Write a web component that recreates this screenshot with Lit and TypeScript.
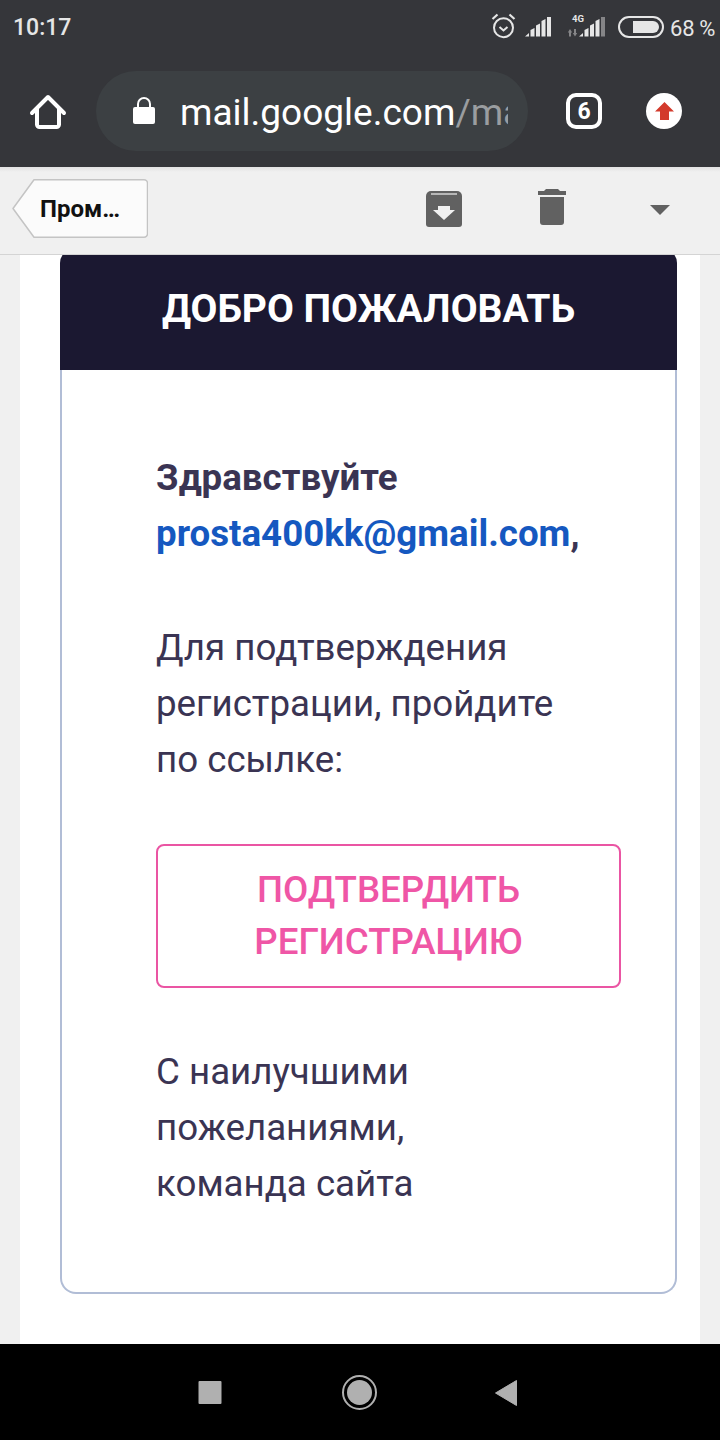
import { LitElement, html, css } from "lit";
import { customElement } from "lit/decorators.js";

@customElement("app-root")
export class AppRoot extends LitElement {
  static styles = css`
    :host { display: block; width: 720px; height: 1440px; font-family: Roboto, "Liberation Sans", sans-serif; }
    .page { width: 720px; height: 1440px; display: flex; flex-direction: column; overflow: hidden; background: #f0f0f0; }
    .chrome { height: 167px; flex: none; background: #35363a; display: flex; flex-direction: column; }
    .status { height: 56px; display: flex; align-items: center; padding: 0 7px 0 13px; color: #e6e6e6; justify-content: space-between; }
    .time { font-size: 23px; font-weight: 500; line-height: 56px; }
    .stat-r { display: flex; align-items: center; }
    .pct { font-size: 22px; margin-left: 6px; width: 43px; white-space: nowrap; word-spacing: -1px; }
    .urlbar { height: 111px; display: flex; align-items: flex-start; position: relative; }
    .home { margin: 37px 0 0 29px; width: 38px; height: 38px; flex: none; }
    .pill { margin: 15px 0 0 29px; width: 432px; height: 80px; box-sizing: border-box; border-radius: 40px; background: #3c4043; display: flex; align-items: center; padding-left: 37px; flex: none; }
    .lock { width: 22px; height: 28px; flex: none; }
    .url { font-size: 37px; color: #fff; margin-left: 25px; width: 328px; overflow: hidden; white-space: nowrap; line-height: 80px; padding-top: 4px; box-sizing: border-box; }
    .url span { color: #9a9da0; }
    .tabs { margin: 37px 0 0 38px; width: 36px; height: 36px; box-sizing: border-box; border: 4px solid #fff; border-radius: 10px; color: #fff; font-size: 23px; font-weight: 700; display: flex; align-items: center; justify-content: center; flex: none; }
    .up { margin: 37px 0 0 44px; width: 36px; height: 36px; flex: none; }
    .toolbar { height: 88px; flex: none; box-sizing: border-box; border-bottom: 1px solid #d4d4d4; background: linear-gradient(#e2e2e2, #f0f0f0 5px); position: relative; display: flex; align-items: flex-start; }
    .back { margin: 12px 0 0 12px; width: 136px; height: 59px; flex: none; position: relative; }
    .back svg { display: block; }
    .back span { position: absolute; left: 28px; top: 0; line-height: 60px; font-size: 24px; font-weight: 700; color: #111; }
    .ti { flex: none; }
    .mail { flex: 1; min-height: 0; margin: 0 20px; background: #fff; padding: 0 23px 0 40px; overflow: hidden; }
    .card-h { height: 121px; margin-top: -6px; background: #1b1831; border-radius: 14px 14px 0 0; color: #fff; font-size: 39px; font-weight: 700; text-align: center; line-height: 120px; }
    .card-b { box-sizing: border-box; height: 924px; background: #fff; border: 2px solid #b1bdd6; border-top: 0; border-radius: 0 0 16px 16px; padding: 80px 54px 0 94px; color: #3a3453; font-size: 36.7px; line-height: 56px; }
    .hello { font-weight: 700; }
    .hello a { color: #1558c0; text-decoration: none; }
    p { margin: 0; }
    .msg { margin-top: 58px; }
    .btn { margin-top: 56px; height: 144px; box-sizing: border-box; border: 2px solid #ea55a3; border-radius: 8px; color: #ef56a6; font-size: 36.7px; font-weight: 500; line-height: 52px; text-align: center; padding-top: 18px; }
    .sign { margin-top: 56px; }
    .nav { height: 96px; flex: none; background: #000; display: flex; align-items: flex-start; }
  `;

  render() {
    return html`<div class="page">
      <div class="chrome">
        <div class="status">
          <span class="time">10:17</span>
          <div class="stat-r">
            <svg width="173" height="32" viewBox="0 0 173 32">
              <g fill="none" stroke="#e6e6e6" stroke-width="2">
                <circle cx="12.500" cy="15.700" r="9.500"/>
                <path d="M8.500 15l4 3.500 4-3.500"/>
                <path d="M1.500 7l5-4.500M23.500 7l-5-4.500" stroke-width="2.200"/>
              </g>
              <g fill="#e6e6e6">
                <path d="M34 24.500l4-3.500v3.500zM39.500 24.500v-6.500l4-2v8.500zM45 24.500V13.500l4-2v13zM50.500 24.500V9l4-2v17.500zM56 24.500V5h4v19.500z"/>
                <text x="81" y="10" font-size="9.500" font-weight="700" font-family="Roboto, sans-serif">4G</text>
                <path d="M88 24.500l4-3.500v3.500zM93.500 24.500v-6.500l4-2v8.500zM99 24.500V13.500l4-2v13zM104.500 24.500V9l4-2v17.500z"/>
                <path d="M110 24.500V5h4v19.500z" opacity=".45"/>
                <path d="M79 17l2.200 3.500H80v4h-2v-4h-1.200zM83 17h2v4h1.200L84 24.500 81.800 21H83z" opacity=".45"/>
              </g>
              <rect x="128" y="5" width="44" height="20" rx="10" fill="none" stroke="#e6e6e6" stroke-width="2"/>
              <path d="M142 9h20a6 6 0 0 1 0 12h-20z" fill="#e6e6e6"/>
            </svg>
            <span class="pct">68 %</span>
          </div>
        </div>
        <div class="urlbar">
          <svg class="home" viewBox="0 0 38 38"><path d="M3 20L19 4l16 16M8 16v15.500a2.500 2.500 0 0 0 2.500 2.500h17a2.500 2.500 0 0 0 2.500-2.500V16" fill="none" stroke="#fff" stroke-width="4" stroke-linecap="round" stroke-linejoin="round"/></svg>
          <div class="pill">
            <svg class="lock" viewBox="0 0 22 28"><path d="M2 10h18a2 2 0 0 1 2 2v13a2 2 0 0 1-2 2H2a2 2 0 0 1-2-2V12a2 2 0 0 1 2-2z" fill="#fff"/><path d="M5 11V7a6 6 0 0 1 12 0v4" fill="none" stroke="#fff" stroke-width="2"/></svg>
            <div class="url">mail.google.com<span>/ma</span></div>
          </div>
          <div class="tabs">6</div>
          <svg class="up" viewBox="0 0 36 36"><circle cx="18" cy="18" r="18" fill="#fff"/><path d="M18.500 9l9.500 9.500h-5V27h-9v-8.500H9z" fill="#d33a2c"/></svg>
        </div>
      </div>
      <div class="toolbar">
        <div class="back">
          <svg width="136" height="59" viewBox="0 0 136 59"><path d="M22 .750h110a3.500 3.500 0 0 1 3.500 3.500v50.500a3.500 3.500 0 0 1-3.500 3.500H22L1 29.500z" fill="#fbfbfb" stroke="#c4c4c4" stroke-width="1.500" stroke-linejoin="round"/></svg>
          <span>Пром…</span>
        </div>
        <svg class="ti" style="margin: 24px 0 0 278px" width="36" height="36" viewBox="0 0 36 36"><path d="M5 0h26a5 5 0 0 1 5 5v28a3 3 0 0 1-3 3H3a3 3 0 0 1-3-3V5a5 5 0 0 1 5-5z" fill="#616161"/><path d="M5 3h26" stroke="#f0f0f0" stroke-width="1.200"/><path d="M12 15h12v4h5L18 29 7 19h5z" fill="#f0f0f0"/></svg>
        <svg class="ti" style="margin: 22px 0 0 76px" width="28" height="36" viewBox="0 0 28 36"><path d="M0 2h6L8 0h12l2 2h6v4H0zM2 8h24v25a3 3 0 0 1-3 3H5a3 3 0 0 1-3-3z" fill="#616161"/></svg>
        <svg class="ti" style="margin: 38px 0 0 84px" width="20" height="10" viewBox="0 0 20 10"><path d="M0 0h20L10 10z" fill="#616161"/></svg>
      </div>
      <div class="mail">
        <div class="card-h">ДОБРО ПОЖАЛОВАТЬ</div>
        <div class="card-b">
          <p class="hello">Здравствуйте<br /><a>prosta400kk@gmail.com</a>,</p>
          <p class="msg">Для подтверждения<br />регистрации, пройдите<br />по ссылке:</p>
          <div class="btn">ПОДТВЕРДИТЬ<br />РЕГИСТРАЦИЮ</div>
          <p class="sign">С наилучшими<br />пожеланиями,<br />команда сайта</p>
        </div>
      </div>
      <div class="nav">
        <svg width="720" height="96" viewBox="0 0 720 96">
          <rect x="198.500" y="37" width="23" height="23" rx="1" fill="#b0b0b0"/>
          <circle cx="359.500" cy="48.500" r="16.500" fill="none" stroke="#b0b0b0" stroke-width="2"/>
          <circle cx="359.500" cy="48.500" r="12.500" fill="#b0b0b0"/>
          <path d="M516.500 36.500v25l-21-12.500z" fill="#b0b0b0" stroke="#b0b0b0" stroke-width="1" stroke-linejoin="round"/>
        </svg>
      </div>
    </div>`;
  }
}
